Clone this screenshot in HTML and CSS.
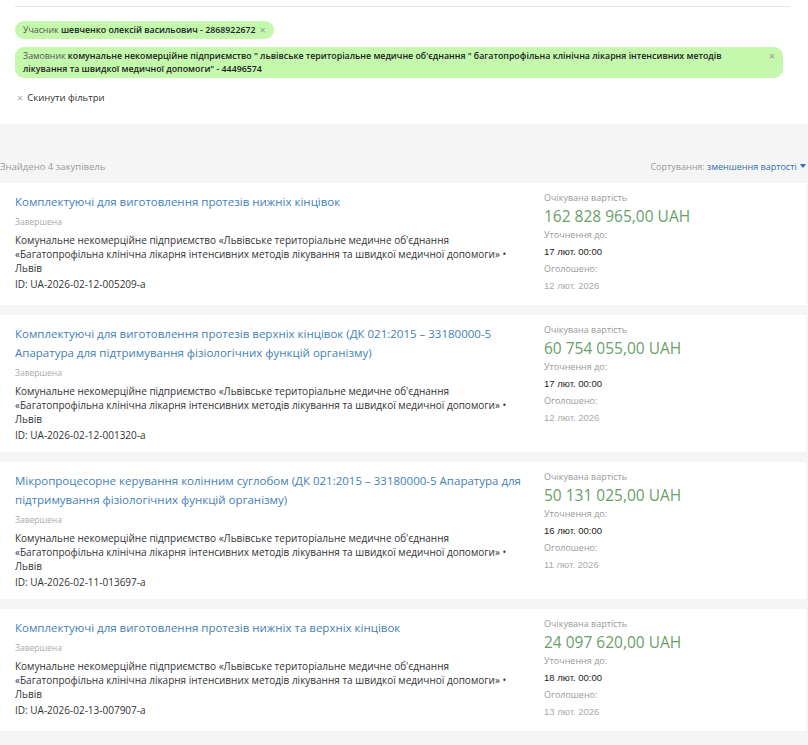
FILE: index.html
```html
<!DOCTYPE html>
<html lang="uk">
<head>
  <meta charset="UTF-8">
  <meta name="viewport" content="width=device-width, initial-scale=1">
  <title>Пошук закупівель</title>
  <link rel="stylesheet" href="styles.css">
</head>
<body>

  <!-- Active filters -->
  <section class="filters">
    <div class="rule"></div>

    <div class="chip">
      <span class="chip-text"><span class="chip-label">Учасник</span> <b>шевченко олексій васильович - 2868922672</b></span>
      <span class="chip-close">&times;</span>
    </div>

    <div class="chip chip-wide">
      <span class="chip-text"><span class="chip-label">Замовник</span> <b>комунальне некомерційне підприємство " львівське територіальне медичне об'єднання " багатопрофільна клінічна лікарня інтенсивних методів лікування та швидкої медичної допомоги" - 44496574</b></span>
      <span class="chip-close">&times;</span>
    </div>

    <a href="#" class="reset"><span class="reset-x">&times;</span> Скинути фільтри</a>
  </section>

  <!-- Search results -->
  <section class="results">
    <div class="results-head">
      <span class="found">Знайдено 4 закупівель</span>
      <span class="sort">Сортування: <a href="#">зменшення вартості <span class="caret"></span></a></span>
    </div>

    <div class="card">
      <div class="card-main">
        <a href="#" class="card-title">Комплектуючі для виготовлення протезів нижніх кінцівок</a>
        <div class="status">Завершена</div>
        <div class="org">Комунальне некомерційне підприємство «Львівське територіальне медичне об'єднання «Багатопрофільна клінічна лікарня інтенсивних методів лікування та швидкої медичної допомоги» • Львів</div>
        <div class="tender-id">ID: UA-2026-02-12-005209-a</div>
      </div>
      <div class="card-side">
        <div class="side-label">Очікувана вартість</div>
        <div class="amount">162 828 965,00 UAH</div>
        <div class="side-label">Уточнення до:</div>
        <div class="side-date">17 лют. 00:00</div>
        <div class="side-label">Оголошено:</div>
        <div class="side-date muted">12 лют. 2026</div>
      </div>
    </div>

    <div class="card">
      <div class="card-main">
        <a href="#" class="card-title">Комплектуючі для виготовлення протезів верхніх кінцівок (ДК 021:2015 – 33180000-5 Апаратура для підтримування фізіологічних функцій організму)</a>
        <div class="status">Завершена</div>
        <div class="org">Комунальне некомерційне підприємство «Львівське територіальне медичне об'єднання «Багатопрофільна клінічна лікарня інтенсивних методів лікування та швидкої медичної допомоги» • Львів</div>
        <div class="tender-id">ID: UA-2026-02-12-001320-a</div>
      </div>
      <div class="card-side">
        <div class="side-label">Очікувана вартість</div>
        <div class="amount">60 754 055,00 UAH</div>
        <div class="side-label">Уточнення до:</div>
        <div class="side-date">17 лют. 00:00</div>
        <div class="side-label">Оголошено:</div>
        <div class="side-date muted">12 лют. 2026</div>
      </div>
    </div>

    <div class="card">
      <div class="card-main">
        <a href="#" class="card-title">Мікропроцесорне керування колінним суглобом (ДК 021:2015 – 33180000-5 Апаратура для підтримування фізіологічних функцій організму)</a>
        <div class="status">Завершена</div>
        <div class="org">Комунальне некомерційне підприємство «Львівське територіальне медичне об'єднання «Багатопрофільна клінічна лікарня інтенсивних методів лікування та швидкої медичної допомоги» • Львів</div>
        <div class="tender-id">ID: UA-2026-02-11-013697-a</div>
      </div>
      <div class="card-side">
        <div class="side-label">Очікувана вартість</div>
        <div class="amount">50 131 025,00 UAH</div>
        <div class="side-label">Уточнення до:</div>
        <div class="side-date">16 лют. 00:00</div>
        <div class="side-label">Оголошено:</div>
        <div class="side-date muted">11 лют. 2026</div>
      </div>
    </div>

    <div class="card">
      <div class="card-main">
        <a href="#" class="card-title">Комплектуючі для виготовлення протезів нижніх та верхніх кінцівок</a>
        <div class="status">Завершена</div>
        <div class="org">Комунальне некомерційне підприємство «Львівське територіальне медичне об'єднання «Багатопрофільна клінічна лікарня інтенсивних методів лікування та швидкої медичної допомоги» • Львів</div>
        <div class="tender-id">ID: UA-2026-02-13-007907-a</div>
      </div>
      <div class="card-side">
        <div class="side-label">Очікувана вартість</div>
        <div class="amount">24 097 620,00 UAH</div>
        <div class="side-label">Уточнення до:</div>
        <div class="side-date">18 лют. 00:00</div>
        <div class="side-label">Оголошено:</div>
        <div class="side-date muted">13 лют. 2026</div>
      </div>
    </div>
  </section>

</body>
</html>
```

FILE: styles.css
```css
/* ========== GLOBAL ========== */
* {
  box-sizing: border-box;
  margin: 0;
  padding: 0;
}

body {
  font-family: "Open Sans", Arial, sans-serif;
  background: #f5f5f5;
  color: #333;
  width: 808px;
}

a {
  text-decoration: none;
}

/* ========== FILTERS ========== */
.filters {
  background: #fff;
  height: 124px;
  padding: 6px 18px 0 15px;
}

.rule {
  height: 1px;
  background: #e4e4e4;
  margin-bottom: 14px;
}

.chip {
  display: flex;
  align-items: flex-start;
  width: fit-content;
  background: #c3f8ad;
  border-radius: 9px;
  padding: 3px 8px;
  font-size: 8.8px;
  line-height: 12px;
  color: #222;
  margin-bottom: 8px;
}

.chip b {
  font-weight: 600;
}

.chip-label {
  color: #555;
}

.chip-close {
  color: #999;
  margin-left: 4px;
  font-size: 11px;
  line-height: 12px;
}

.chip-wide {
  width: 768px;
  padding: 3px 8px 2px 8px;
  line-height: 13px;
}

.chip-wide .chip-text {
  flex: 1;
  padding-right: 20px;
}

.reset {
  display: flex;
  align-items: center;
  margin-top: 13px;
  font-size: 9.5px;
  line-height: 14px;
  color: #333;
}

.reset-x {
  color: #aaa;
  font-size: 11px;
  margin: 0 4px 0 2px;
}

/* ========== RESULTS ========== */
.results {
  padding: 0 2px 12px 0;
}

.results-head {
  display: flex;
  justify-content: space-between;
  align-items: center;
  height: 59px;
  padding-top: 26px;
  font-size: 9.5px;
  color: #999;
}

.sort {
  font-size: 9px;
}

.sort a {
  color: #2d6fb3;
}

.caret {
  display: inline-block;
  border-left: 3.5px solid transparent;
  border-right: 3.5px solid transparent;
  border-top: 4px solid #2d6fb3;
  vertical-align: 2px;
  margin-left: 1px;
}

.card {
  display: grid;
  grid-template-columns: 1fr 262px;
  background: #fff;
  padding: 7px 0 10px 15px;
  margin-bottom: 10px;
}

.card-main {
  padding-top: 2px;
  padding-right: 22px;
}

.card-title {
  display: block;
  color: #3f7fb7;
  font-size: 11.5px;
  line-height: 19px;
}

.status {
  color: #aaa;
  font-size: 8.5px;
  line-height: 13px;
  margin-top: 4px;
}

.org {
  font-size: 10px;
  line-height: 14px;
  margin-top: 5px;
  color: #333;
}

.tender-id {
  font-size: 10px;
  line-height: 14px;
  margin-top: 2px;
  color: #333;
}

.side-label {
  font-size: 9px;
  line-height: 16px;
  color: #999;
}

.amount {
  font-size: 15.5px;
  line-height: 20px;
  color: #6a9f6a;
  margin-bottom: 1px;
}

.side-date {
  font-family: "Liberation Sans", Arial, sans-serif;
  font-size: 9.5px;
  line-height: 18px;
  color: #222;
}

.side-date.muted {
  color: #aaa;
}
```
